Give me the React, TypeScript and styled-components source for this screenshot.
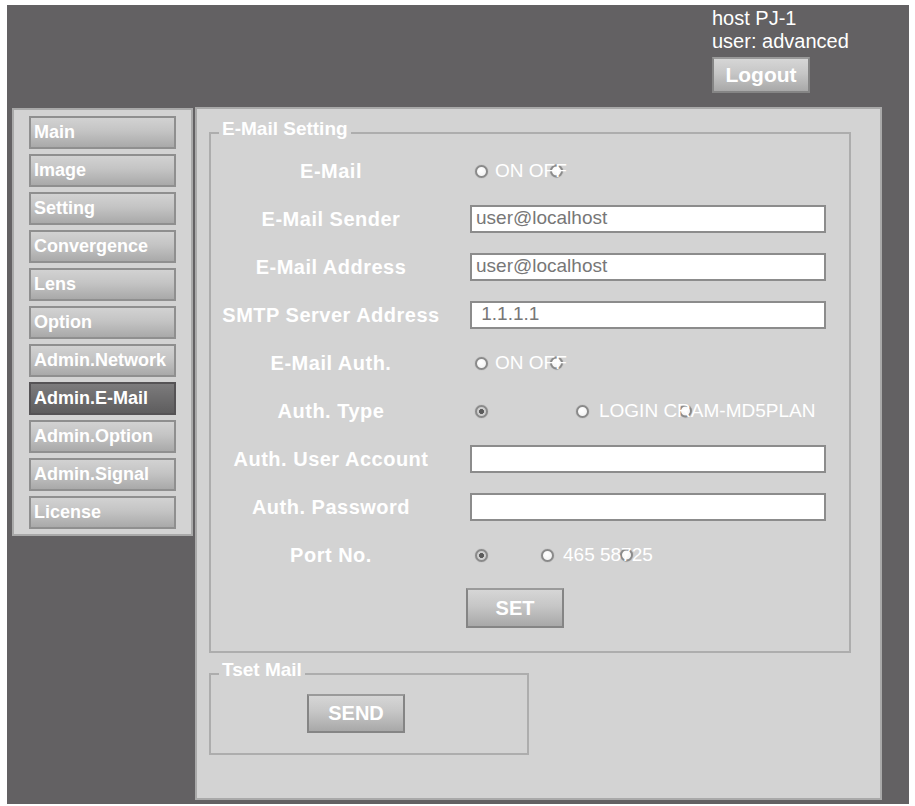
import React from 'react';
import styled, { createGlobalStyle } from 'styled-components';

const GlobalStyle = createGlobalStyle`
  html, body {
    margin: 0;
    padding: 0;
    background: #ffffff;
  }
  body {
    font-family: "Liberation Sans", Arial, sans-serif;
  }
`;

const Frame = styled.div({
  margin: '5px 6px 2px 7px',
  width: '902px',
  height: '799px',
  background: '#636163',
  display: 'flex',
  flexDirection: 'column',
});

const Header = styled.header({
  height: '102px',
  display: 'flex',
  justifyContent: 'flex-end',
  flex: 'none',
});

const UserBox = styled.div({
  width: '197px',
  paddingTop: '2px',
  color: '#ffffff',
  fontSize: '20px',
  lineHeight: '23px',
});

const UserLine = styled.div({
  whiteSpace: 'nowrap',
});

const Body = styled.div({
  display: 'flex',
  alignItems: 'flex-start',
  gap: '2px',
  paddingLeft: '5px',
});

const Sidebar = styled.nav({
  width: '181px',
  boxSizing: 'border-box',
  marginTop: '1px',
  padding: '6px 15px 5px 15px',
  background: '#d3d3d3',
  border: '2px solid #a9a9a9',
  display: 'flex',
  flexDirection: 'column',
  gap: '5px',
});

const NavButton = styled.div<{ $active?: boolean }>`
  height: 33px;
  box-sizing: border-box;
  padding-left: 3px;
  display: flex;
  align-items: center;
  border: 2px solid ${(p) => (p.$active ? '#555355' : '#8f8f8f')};
  background: ${(p) =>
    p.$active
      ? 'linear-gradient(#7c7b7c, #5e5d5e)'
      : 'linear-gradient(#d2d2d2 0%, #c4c4c4 45%, #a9a9a9 100%)'};
  color: #ffffff;
  font-weight: bold;
  font-size: 18px;
  white-space: nowrap;
  overflow: hidden;
`;

const MainPanel = styled.main({
  width: '687px',
  height: '693px',
  boxSizing: 'border-box',
  background: '#d3d3d3',
  border: '2px solid #a9a9a9',
  padding: '10px 12px 0 12px',
});

const FieldSet = styled.fieldset<{ $width: number }>`
  margin: 0;
  width: ${(p) => p.$width}px;
  box-sizing: border-box;
  border: 2px solid #adadad;
  padding: 0;
  min-width: 0;
`;

const Legend = styled.legend({
  marginLeft: '8px',
  padding: '0 3px 8px 3px',
  lineHeight: '20px',
  color: '#ffffff',
  fontWeight: 'bold',
  fontSize: '19px',
});

const Grid = styled.div({
  display: 'grid',
  gridTemplateColumns: '240px 356px',
  gridAutoRows: '48px',
  columnGap: '19px',
  alignItems: 'center',
});

const Label = styled.div({
  textAlign: 'center',
  color: '#ffffff',
  fontWeight: 'bold',
  fontSize: '20px',
  letterSpacing: '0.5px',
  whiteSpace: 'nowrap',
});

const TextInput = styled.input({
  width: '356px',
  height: '28px',
  boxSizing: 'border-box',
  border: '2px solid #8c8c8c',
  background: '#ffffff',
  padding: '0 0 3px 4px',
  fontFamily: '"Liberation Sans", Arial, sans-serif',
  fontSize: '19px',
  color: '#777777',
  outline: 'none',
});

const RadioRow = styled.div({
  position: 'relative',
  display: 'flex',
  alignItems: 'center',
  paddingLeft: '5px',
  height: '24px',
});

const Radio = styled.span<{ $checked?: boolean; $gap?: number }>`
  flex: none;
  width: 13px;
  height: 13px;
  box-sizing: border-box;
  margin-left: ${(p) => p.$gap ?? 0}px;
  border-radius: 50%;
  border: 2px solid #8a8a8a;
  background: ${(p) =>
    p.$checked
      ? 'radial-gradient(circle, #5b5b5b 0 2.2px, #cfcfcf 2.8px)'
      : 'radial-gradient(circle at 40% 35%, #ffffff, #f0f0f0)'};
  box-shadow: 0 0 1px rgba(0, 0, 0, 0.35);
`;

const StrayRadio = styled(Radio)<{ $left: number }>`
  position: absolute;
  left: ${(p) => p.$left}px;
  top: 50%;
  transform: translateY(-50%);
`;

const RadioText = styled.span<{ $gap: number }>`
  position: relative;
  z-index: 1;
  margin-left: ${(p) => p.$gap}px;
  color: #ffffff;
  font-size: 19px;
  white-space: nowrap;
`;

const Button = styled.button<{ $width: number; $height: number }>`
  width: ${(p) => p.$width}px;
  height: ${(p) => p.$height}px;
  box-sizing: border-box;
  border: 2px solid #858585;
  border-top-color: #9a9a9a;
  background: linear-gradient(#d6d6d6 0%, #c6c6c6 45%, #a8a8a8 100%);
  color: #ffffff;
  font-family: "Liberation Sans", Arial, sans-serif;
  font-weight: bold;
  font-size: 20px;
  padding: 0;
`;

const LogoutButton = styled(Button)({
  marginTop: '4px',
  fontSize: '21px',
});

const SetRow = styled.div({
  padding: '9px 0 23px 255px',
});

const TestMailSet = styled(FieldSet)({
  marginTop: '7px',
});

const SendRow = styled.div({
  padding: '6px 0 20px 96px',
});

const navItems = [
  'Main',
  'Image',
  'Setting',
  'Convergence',
  'Lens',
  'Option',
  'Admin.Network',
  'Admin.E-Mail',
  'Admin.Option',
  'Admin.Signal',
  'License',
];

export default function App() {
  return (
    <>
      <GlobalStyle />
      <Frame>
        <Header>
          <UserBox>
            <UserLine>host PJ-1</UserLine>
            <UserLine>user: advanced</UserLine>
            <LogoutButton $width={98} $height={36}>Logout</LogoutButton>
          </UserBox>
        </Header>
        <Body>
          <Sidebar>
            {navItems.map((item) => (
              <NavButton key={item} $active={item === 'Admin.E-Mail'}>
                {item}
              </NavButton>
            ))}
          </Sidebar>
          <MainPanel>
            <FieldSet $width={642}>
              <Legend>E-Mail Setting</Legend>
              <Grid>
                <Label>E-Mail</Label>
                <RadioRow>
                  <Radio />
                  <StrayRadio $left={80} />
                  <RadioText $gap={7}>ON OFF</RadioText>
                </RadioRow>

                <Label>E-Mail Sender</Label>
                <TextInput defaultValue="user@localhost" />

                <Label>E-Mail Address</Label>
                <TextInput defaultValue="user@localhost" />

                <Label>SMTP Server Address</Label>
                <TextInput defaultValue=" 1.1.1.1" />

                <Label>E-Mail Auth.</Label>
                <RadioRow>
                  <Radio />
                  <StrayRadio $left={80} />
                  <RadioText $gap={7}>ON OFF</RadioText>
                </RadioRow>

                <Label>Auth. Type</Label>
                <RadioRow>
                  <Radio $checked />
                  <Radio $gap={88} />
                  <StrayRadio $left={209} />
                  <RadioText $gap={10}>LOGIN CRAM-MD5PLAN</RadioText>
                </RadioRow>

                <Label>Auth. User Account</Label>
                <TextInput defaultValue="" />

                <Label>Auth. Password</Label>
                <TextInput type="password" defaultValue="" />

                <Label>Port No.</Label>
                <RadioRow>
                  <Radio $checked />
                  <Radio $gap={53} />
                  <StrayRadio $left={150} />
                  <RadioText $gap={9}>465 58725</RadioText>
                </RadioRow>
              </Grid>
              <SetRow>
                <Button $width={98} $height={40}>SET</Button>
              </SetRow>
            </FieldSet>
            <TestMailSet $width={320}>
              <Legend>Tset Mail</Legend>
              <SendRow>
                <Button $width={98} $height={39}>SEND</Button>
              </SendRow>
            </TestMailSet>
          </MainPanel>
        </Body>
      </Frame>
    </>
  );
}
